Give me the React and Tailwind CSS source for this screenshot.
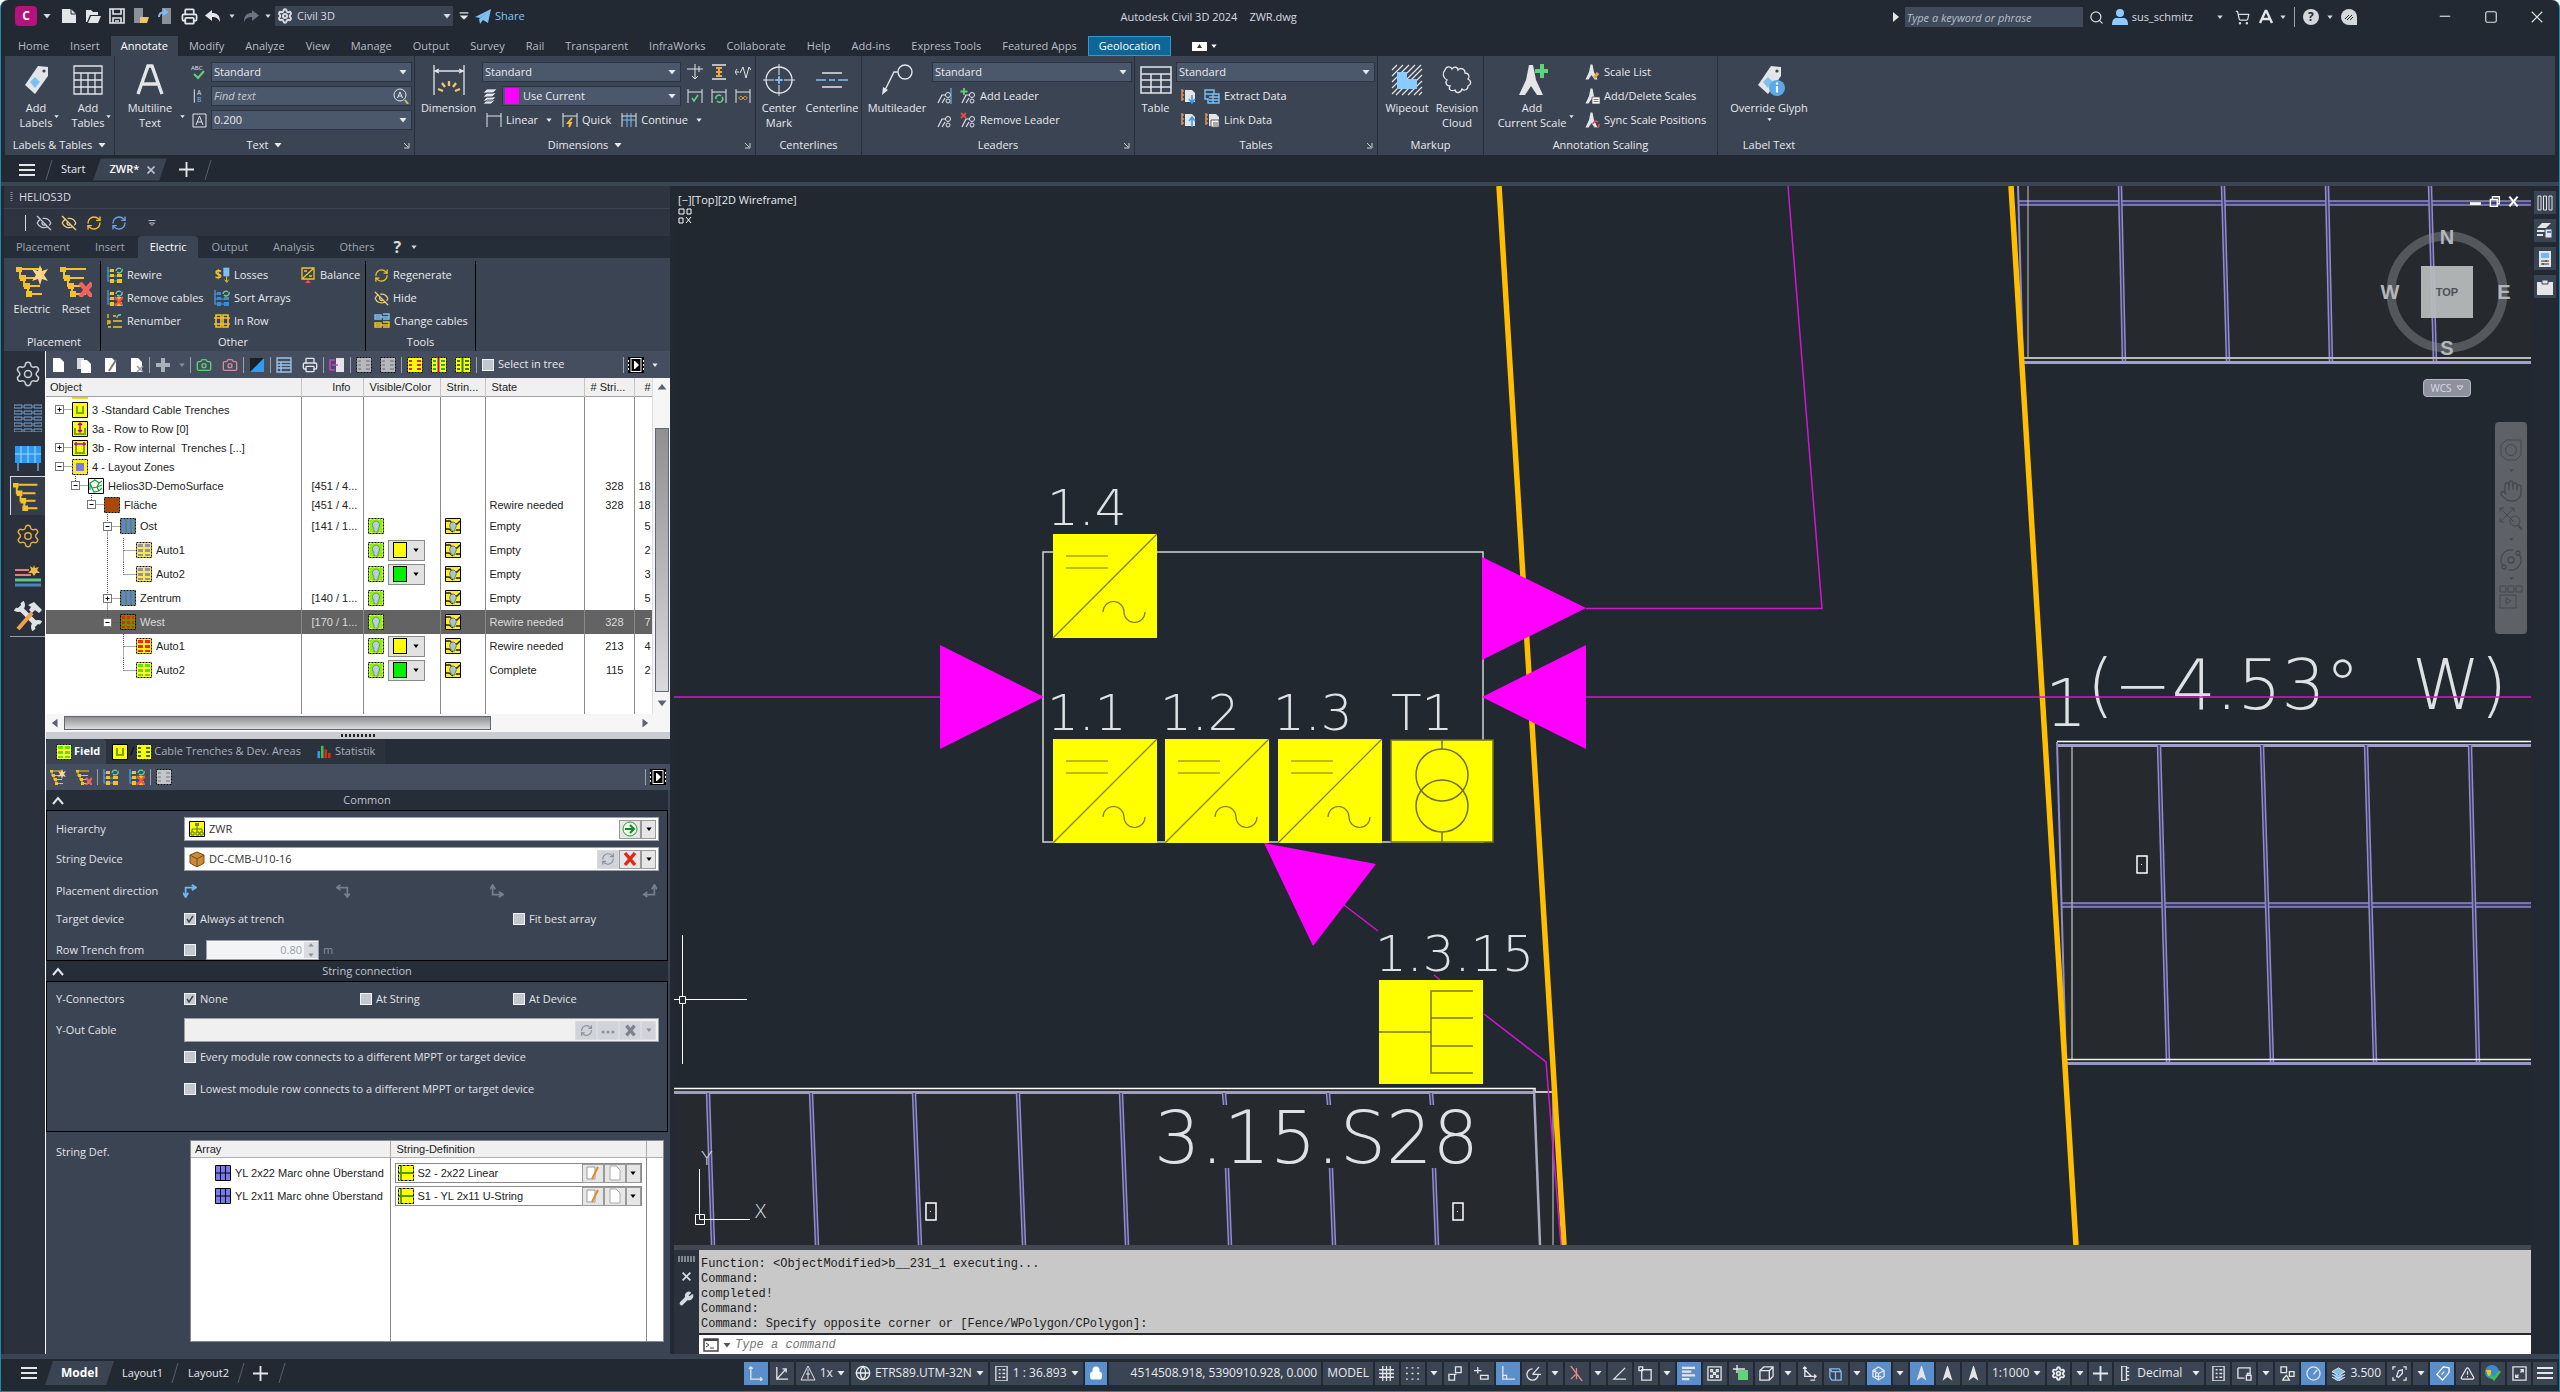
import { useState } from 'react';
import clsx from 'clsx';
import {
  Settings, Search, ShoppingCart, TriangleAlert, Hand, Printer, RefreshCw, EyeOff, Lock, Globe,
  Wrench, Camera, Orbit,
} from 'lucide-react';

/* ---------- small helpers ---------- */

function Svg({ w = 16, h = w, box = '0 0 16 16', className, children }) {
  return (
    <svg width={w} height={h} viewBox={box} fill="none" className={clsx('shrink-0', className)} aria-hidden="true">
      {children}
    </svg>
  );
}

function Caret({ size = 8, className }) {
  return (
    <Svg w={size} box="0 0 8 8" className={className}>
      <path d="M0.5 2h7L4 6.5z" fill="currentColor" />
    </Svg>
  );
}

function Sep({ className }) {
  return <span className={clsx('w-px shrink-0 bg-[#9aa1ad]', className)} />;
}

function Combo({ label, value, className, children }) {
  return (
    <div className={clsx('relative flex h-5 items-center border border-[#2b3442] bg-[#4b576a] text-[#e8eaee]', className)}>
      {children}
      <select aria-label={label} className="h-full min-w-0 flex-1 appearance-none bg-transparent pl-0.5 outline-none">
        <option>{value}</option>
      </select>
      <Caret className="pointer-events-none absolute right-1" />
    </div>
  );
}

function BigButton({ lines, caret, caretBelow, className, children }) {
  return (
    <button className={clsx('relative flex shrink-0 flex-col items-center pt-2', className)}>
      <span className="flex h-8 items-center justify-center">{children}</span>
      <span className="mt-1 flex flex-col leading-[15px]">
        {lines.map(l => <span key={l}>{l}</span>)}
      </span>
      {caret && <Caret size={5} className="absolute right-0 bottom-4" />}
      {caretBelow && <Caret size={5} className="mt-0.5" />}
    </button>
  );
}

function Panel({ title, caret, corner, className, children }) {
  return (
    <section className={clsx('flex shrink-0 flex-col border-r border-[#272f3c]', className)}>
      <div className="flex flex-1">{children}</div>
      <div className="relative flex h-5 items-center justify-center gap-1.5">
        {title}
        {caret && <Caret />}
        {corner && (
          <Svg w={7} box="0 0 7 7" className="absolute right-1">
            <path d="M1 1l4 4M6 1v5H1" stroke="#c9cdd4" />
          </Svg>
        )}
      </div>
    </section>
  );
}

function SmallButton({ icon, label, caret, className }) {
  return (
    <button className={clsx('flex h-5 items-center gap-1', className)}>
      {icon}
      {label}
      {caret && <Caret size={6} className="ml-1" />}
    </button>
  );
}

/* ---------- ribbon glyphs ---------- */

const W = '#e3e5e9';
const B = '#7cc0f2';
const G = '#5fd27a';
const R = '#e5484d';
const Y = '#f3c22b';

const TagIcon = ({ info }) => (
  <Svg w={32} box="0 0 32 32">
    <path d="M18 2l10 1v9L15 30 5 21z" fill={W} />
    <circle cx="24" cy="7" r="1.6" fill="#3b4453" />
    <path d="M15 13l5 5-5 6-5-6z" fill={B} />
    {info && (
      <>
        <circle cx="24" cy="24" r="8" fill="#5aa9e6" />
        <path d="M24 18.5v2M24 22v6.5" stroke="#fff" strokeWidth="2.2" />
      </>
    )}
  </Svg>
);

const GridTable = () => (
  <Svg w={32} box="0 0 32 32">
    <path d="M2 2h28v28H2zM2 9h28M2 16h28M2 23h28M9 9v21M16 9v21M23 9v21" stroke={W} strokeWidth="1.3" />
  </Svg>
);

const TableIcon = () => (
  <Svg w={32} box="0 0 32 32">
    <path d="M1 3h30v26H1zM1 10h30M1 16h30M1 23h30M11 10v19M21 10v19" stroke={W} strokeWidth="1.5" />
  </Svg>
);

const LetterA = () => (
  <Svg w={32} box="0 0 32 32">
    <path d="M4 30L14 2h4l10 28M9 20h14" stroke={W} strokeWidth="3.4" />
  </Svg>
);

const DimensionIcon = () => (
  <Svg w={32} box="0 0 32 32">
    <path d="M1 1v30M31 1v30M3 7h26M6 5L2 7l4 2M26 5l4 2-4 2" stroke={W} strokeWidth="1.3" />
    <path d="M16 17v5M9 19l3 4M23 19l-3 4M5 25l5 2M27 25l-5 2" stroke="#f0c46a" strokeWidth="2.4" />
  </Svg>
);

const CenterMark = () => (
  <Svg w={32} box="0 0 32 32">
    <circle cx="16" cy="16" r="13" stroke={W} strokeWidth="1.3" />
    <path d="M16 0v32M0 16h32" stroke={W} strokeDasharray="11 2 6 2" />
    <path d="M16 12v8M12 16h8" stroke={B} strokeWidth="1.5" />
  </Svg>
);

const Centerline = () => (
  <Svg w={32} box="0 0 32 32">
    <path d="M6 9h20M6 23h20" stroke={W} strokeWidth="1.4" />
    <path d="M0 16h10M13 16h6M22 16h10" stroke={B} strokeWidth="1.4" />
  </Svg>
);

const LeaderIcon = () => (
  <Svg w={32} box="0 0 32 32">
    <circle cx="24" cy="8" r="7" stroke={W} strokeWidth="1.4" />
    <path d="M17 8h-4L3 28" stroke={W} strokeWidth="1.4" />
    <path d="M1 31l1-8 5 3z" fill={W} />
  </Svg>
);

const WipeoutIcon = () => (
  <Svg w={32} box="0 0 32 32">
    <path
      d="M1 6l5-5M1 12L12 1M1 18L18 1M1 24L24 1M1 30L30 1M5 31L31 5M11 31l20-20M17 31l14-14M23 31l8-8M28 31l3-3"
      stroke={W}
      strokeWidth="1.2"
    />
    <path d="M6 8h10v7h10v10H6z" fill="#8ccbff" />
  </Svg>
);

const CloudIcon = () => (
  <Svg w={32} box="0 0 32 32">
    <path
      d="M4 6c1-4 6-4 7-1 2-3 6-2 6 1 3-3 7-1 7 3 4 0 5 4 3 6 4 2 3 6 0 7 0 4-4 5-6 3-1 4-6 5-7 1-4 2-7-1-5-4-4 0-5-4-3-6-4-2-5-7-2-10z"
      stroke={W}
      strokeWidth="1.3"
    />
  </Svg>
);

const ScaleFig = ({ badge, big }) => (
  <Svg w={big ? 32 : 16}>
    <path d="M6.5 0.5h2L10 8l3.5 7.5h-3L7.5 11l-3 4.5h-3L5 8z" fill={W} />
    {badge === 'plus' && <path d="M13 0v7M9.5 3.5h6.5" stroke={G} strokeWidth="2" />}
    {badge === 'pencil' && <path d="M10 14l4-5" stroke="#f0a04b" strokeWidth="3" />}
    {badge === 'list' && <path d="M8 9h8v7H8zM9.5 11.5h5M9.5 13.5h5" fill="#fff" stroke="#555" strokeWidth="0.8" />}
    {badge === 'sync' && <path d="M9 12a3 3 0 015-2M15 12a3 3 0 01-5 3" stroke={R} strokeWidth="1.5" />}
  </Svg>
);

const DimSmall = ({ kind }) => (
  <Svg>
    {kind !== 'jog' && kind !== 'break' && kind !== 'space' && <path d="M1 1v14M15 1v14M1 4h14" stroke={W} />}
    {kind === 'break' && <path d="M8 0v15M5 12l3 3 3-3M0 5h16M12 2v6" stroke={W} />}
    {kind === 'jog' && <path d="M0 8h4M2 5L0 8l2 3M5 9l3-6 3 11 3-11 2 3" stroke={W} />}
    {kind === 'space' && <><path d="M1 1h14M1 15h14" stroke={W} strokeWidth="1.4" /><path d="M8 3v10M5 4h6M5 8h6M5 12h6" stroke="#f0a93a" strokeWidth="2" /></>}
    {kind === 'check' && <path d="M5 10l2 3 4-6" stroke={G} strokeWidth="1.6" />}
    {kind === 'update' && <path d="M5 11a3 3 0 015-3M11 9a3 3 0 01-5 4" stroke={G} strokeWidth="1.5" />}
    {kind === 'link' && <path d="M8 10c-2-3-4-1-4 0s2 3 4 0 4-1 4 0-2 3-4 0z" stroke="#f0a93a" />}
    {kind === 'quick' && <path d="M10 6l-4 5h3l-2 4" stroke="#f0b84a" strokeWidth="2" />}
    {kind === 'cont' && <path d="M6 1v14M10 1v14M1 8h14" stroke={B} />}
  </Svg>
);

const LayersIcon = () => (
  <Svg>
    <path d="M5 1h10l-4 4H1zM5 5h9l-4 4H1zM5 9h9l-4 4H1zM5 12h8l-4 4H1z" fill={W} stroke="#3b4453" strokeWidth="0.7" />
  </Svg>
);

const MultiSmall = ({ badge }) => (
  <Svg>
    <path d="M2 15l4-8h4M6 15l3-5" stroke={W} strokeWidth="1.2" />
    <circle cx="12" cy="7" r="2.5" stroke={W} />
    <circle cx="12" cy="13" r="2" stroke={W} />
    {badge === 'plus' && <path d="M4 0v7M0.5 3.5h7" stroke={G} strokeWidth="1.8" />}
    {badge === 'x' && <path d="M1 1l5 5M6 1L1 6" stroke={R} strokeWidth="1.8" />}
    {badge === 'align' && <path d="M15 0v16" stroke={B} />}
  </Svg>
);

const DataIcon = ({ kind }) => (
  <Svg>
    {kind === 'extract' ? (
      <path d="M1 2h9v4h5v9H4v-4H1zM1 6h9M5 9h10M5 12h10M9 6v9" stroke={B} strokeWidth="1.4" />
    ) : (
      <>
        <path d="M5 2h7l3 3v9H5z" fill={W} />
        <path d="M2 1v12M2 3h2M2 7h2M2 11h2" stroke="#e0915a" strokeWidth="1.5" />
        {kind === 'down' && <path d="M12 7v7M9 11l3 4 3-4" stroke="#3b9be8" strokeWidth="1.6" />}
        {kind === 'up' && <path d="M12 15V6M9 9l3-4 3 4" stroke="#3b9be8" strokeWidth="1.6" />}
        {kind === 'link' && <path d="M7 8h8v7H7zM9 11h5M9 13h5" fill="#fff" stroke="#555" />}
      </>
    )}
  </Svg>
);

/* ---------- title bar ---------- */

function TitleBar() {
  return (
    <header className="flex h-[35px] shrink-0 items-start justify-between pt-[5px] pr-2 pl-3.5 text-[#d8dbe0]">
      <div className="flex items-center">
        <button aria-label="Application menu" className="flex h-5 w-[22px] items-center justify-center rounded-sm bg-[#b5127c] text-[12px] font-bold text-white">C</button>
        <Caret className="mx-1.5" />
        <button aria-label="New" className="flex w-6 justify-center">
          <Svg><path d="M1 1h9l5 5v9H1z" fill={W} /><path d="M10 1v5h5" stroke="#222933" /></Svg>
        </button>
        <button aria-label="Open" className="flex w-6 justify-center">
          <Svg><path d="M1 2h5l2 2h5v3H5l-3 7H1z" fill={W} /><path d="M6 8h10l-3 7H3z" fill={W} /></Svg>
        </button>
        <button aria-label="Save" className="flex w-6 justify-center">
          <Svg><path d="M1 1h14v14H1zM4 1v5h8V1M4 15v-5h8v5M6 13h4" stroke={W} strokeWidth="1.6" /></Svg>
        </button>
        <button aria-label="Save as" className="flex w-6 justify-center">
          <Svg><path d="M1 0h9v15H1z" fill="#8b919b" /><path d="M7 9h9l-2 6H7z" fill="#f0c46a" /></Svg>
        </button>
        <button aria-label="Open from web" className="flex w-6 justify-center">
          <Svg><path d="M5 0h9v16H5z" fill="#8b919b" /><path d="M2 9c0-4 2-5 6-5M6 1l4 3-4 3" stroke={B} strokeWidth="2" /></Svg>
        </button>
        <button aria-label="Plot" className="flex w-6 justify-center"><Printer size={17} strokeWidth={2.5} color={W} /></button>
        <button aria-label="Undo" className="flex w-6 justify-center">
          <Svg><path d="M7 2v3c5 0 8 2 8 9-2-4-4-5-8-5v4L0 7.5z" fill={W} /></Svg>
        </button>
        <Caret size={6} className="mx-1" />
        <button aria-label="Redo" className="flex w-6 justify-center">
          <Svg><path d="M9 2v3C4 5 1 7 1 14c2-4 4-5 8-5v4l7-5.5z" fill="#6c7380" /></Svg>
        </button>
        <Caret size={6} className="mr-1 ml-0.5" />
        <div className="relative flex h-5 w-[178px] items-center bg-[#3b4453] pl-0.5">
          <Settings size={16} strokeWidth={3} />
          <select aria-label="Workspace" className="h-full flex-1 appearance-none bg-transparent pl-1 outline-none">
            <option>Civil 3D</option>
          </select>
          <Caret className="pointer-events-none absolute right-0.5" />
        </div>
        <Svg w={10} className="mx-1.5"><path d="M1 3h14" stroke={W} strokeWidth="2" /><path d="M1 7h14l-7 7z" fill={W} /></Svg>
        <button className="flex items-center gap-1 text-[#84c6f5]">
          <Svg><path d="M0 9L16 1l-3 14-5-3-3 4-1-5 9-7-8 6z" fill={B} /></Svg>
          Share
        </button>
      </div>

      <h1 className="flex h-[22px] items-center gap-3 whitespace-pre">
        <span>Autodesk Civil 3D 2024</span>
        <span>ZWR.dwg</span>
      </h1>

      <div className="flex h-[22px] items-center">
        <Svg w={6} h={10} box="0 0 6 10"><path d="M0 0l6 5-6 5z" fill={W} /></Svg>
        <input aria-label="Search" placeholder="Type a keyword or phrase" className="ml-1.5 h-5 w-[178px] bg-[#3f4b5b] px-0.5 italic outline-none placeholder:text-[#b9bec7]" />
        <button aria-label="Search" className="ml-1.5"><Search size={15} /></button>
        <Svg className="ml-2"><circle cx="8" cy="4" r="4" fill="#8ccbff" /><path d="M0 16c0-5 2-7 4-7h8c2 0 4 2 4 7z" fill="#8ccbff" /></Svg>
        <span className="ml-1">sus_schmitz</span>
        <Caret size={6} className="ml-6" />
        <button aria-label="Store" className="ml-3"><ShoppingCart size={15} /></button>
        <button aria-label="Autodesk app" className="ml-2">
          <Svg><path d="M8 1l6 13M8 1L2 14M3 10h10" stroke={W} strokeWidth="2.4" /></Svg>
        </button>
        <Caret size={6} className="ml-1.5" />
        <Sep className="mx-2 h-5 bg-[#5a6270]" />
        <button aria-label="Help" className="flex h-4 w-4 items-center justify-center rounded-full bg-[#d5d7db] text-[12px] font-bold text-[#222933]">?</button>
        <Caret size={6} className="mx-2" />
        <Svg><path d="M8 0a8 8 0 018 8v8H8A8 8 0 018 0z" fill="#d5d7db" /><path d="M4 10l4-4M6 11l5-5M9 11l3-3" stroke="#222933" /></Svg>
        <button aria-label="Minimize" className="ml-[82px]"><Svg w={12}><path d="M1 7h14" stroke={W} strokeWidth="1.5" /></Svg></button>
        <button aria-label="Maximize" className="ml-[34px]"><Svg w={12}><rect x="1" y="1" width="14" height="14" rx="2" stroke={W} strokeWidth="1.5" /></Svg></button>
        <button aria-label="Close" className="mr-2 ml-[34px]"><Svg w={12}><path d="M1 1l14 14M15 1L1 15" stroke={W} strokeWidth="1.5" /></Svg></button>
      </div>
    </header>
  );
}

const MENU = [
  'Home', 'Insert', 'Annotate', 'Modify', 'Analyze', 'View', 'Manage', 'Output', 'Survey', 'Rail', 'Transparent',
  'InfraWorks', 'Collaborate', 'Help', 'Add-ins', 'Express Tools', 'Featured Apps', 'Geolocation',
];

function MenuTabs() {
  return (
    <nav className="flex h-5 shrink-0 gap-px pl-[7px]">
      {MENU.map(m => (
        <button
          key={m}
          className={clsx(
            'h-full px-2.5',
            m === 'Annotate' && 'bg-[#3b4453] text-white',
            m === 'Geolocation' && 'border border-[#2f9bcb] bg-[#0e6696] text-white',
            m !== 'Annotate' && m !== 'Geolocation' && 'text-[#b6bbc4]',
          )}
        >
          {m}
        </button>
      ))}
      <button aria-label="Minimize ribbon" className="ml-5 flex items-center gap-1 text-white">
        <Svg w={15} h={9} box="0 0 15 9"><path d="M0 0h15v9H0z" fill="#fff" /><path d="M5 6l2.5-4L10 6z" fill="#333" /></Svg>
        <Caret size={6} />
      </button>
    </nav>
  );
}

function Ribbon() {
  return (
    <div className="mr-1 ml-1 flex h-[99px] shrink-0 bg-[#3b4453] text-[#e8eaee]">
      <Panel title="Labels & Tables" caret className="w-[110px]">
        <BigButton lines={['Add', 'Labels']} caret className="ml-2 w-[46px]"><TagIcon /></BigButton>
        <BigButton lines={['Add', 'Tables']} caret className="ml-1.5 w-[46px]"><GridTable /></BigButton>
      </Panel>

      <Panel title="Text" caret corner className="w-[300px]">
        <BigButton lines={['Multiline', 'Text']} caret className="w-[70px]"><LetterA /></BigButton>
        <div className="flex flex-1 flex-col gap-1 pt-1.5 pr-0.5 pl-1.5">
          <div className="flex items-center gap-1">
            <Svg><path d="M3 10l4 4 6-7" stroke={G} strokeWidth="2" /><text x="0" y="6" fontSize="6" fill={W}>ABC</text></Svg>
            <Combo label="Text style" value="Standard" className="flex-1" />
          </div>
          <div className="flex items-center gap-1">
            <Svg box="0 0 24 24"><path d="M5 2v20" stroke={W} strokeWidth="1.5" /><text x="9" y="11" fontSize="10" fill={W}>A</text><text x="9" y="21" fontSize="10" fill={B}>B</text></Svg>
            <div className="flex h-5 flex-1 items-center border border-[#2b3442] bg-[#4b576a] pr-0.5">
              <input aria-label="Find text" placeholder="Find text" className="min-w-0 flex-1 bg-transparent pl-0.5 italic outline-none placeholder:text-[#c3c7ce]" />
              <Svg><circle cx="7" cy="7" r="6" stroke={W} /><path d="M4.5 10L7 4l2.5 6M5.5 8h3" stroke={W} /><path d="M12 12l3 4" stroke="#d8b46a" strokeWidth="2" /></Svg>
            </div>
          </div>
          <div className="flex items-center gap-1">
            <Svg><path d="M2 2h13v13H2z" stroke={W} /><path d="M5 13l3.5-9 3.5 9M6 10h5" stroke={W} /></Svg>
            <Combo label="Text height" value="0.200" className="flex-1" />
          </div>
        </div>
      </Panel>

      <Panel title="Dimensions" caret corner className="w-[341px]">
        <BigButton lines={['Dimension']} className="w-[67px]"><DimensionIcon /></BigButton>
        <div className="flex flex-1 flex-col gap-1 pt-1.5">
          <div className="flex items-center">
            <Combo label="Dimension style" value="Standard" className="w-[199px]" />
            <div className="flex gap-2 pl-1.5"><DimSmall kind="break" /><DimSmall kind="space" /><DimSmall kind="jog" /></div>
          </div>
          <div className="flex items-center">
            <span className="w-5"><LayersIcon /></span>
            <Combo label="Dimension layer" value="Use Current" className="w-[179px]">
              <span className="mr-0.5 ml-0.5 h-4 w-3.5 bg-[#ff00ff]" />
            </Combo>
            <div className="flex gap-2 pl-1.5"><DimSmall kind="check" /><DimSmall kind="update" /><DimSmall kind="link" /></div>
          </div>
          <div className="flex items-center gap-2.5 pl-1">
            <SmallButton icon={<DimSmall />} label="Linear" caret />
            <SmallButton icon={<DimSmall kind="quick" />} label="Quick" />
            <SmallButton icon={<DimSmall kind="cont" />} label="Continue" caret />
          </div>
        </div>
      </Panel>

      <Panel title="Centerlines" className="w-[106px]">
        <BigButton lines={['Center', 'Mark']} className="w-[46px]"><CenterMark /></BigButton>
        <BigButton lines={['Centerline']} className="w-[60px]"><Centerline /></BigButton>
      </Panel>

      <Panel title="Leaders" corner className="w-[273px]">
        <BigButton lines={['Multileader']} className="w-[70px]"><LeaderIcon /></BigButton>
        <div className="flex flex-1 flex-col gap-1 pt-1.5 pr-0.5">
          <Combo label="Leader style" value="Standard" />
          <div className="flex items-center gap-2 pl-1"><MultiSmall badge="align" /><SmallButton icon={<MultiSmall badge="plus" />} label="Add Leader" /></div>
          <div className="flex items-center gap-2 pl-1"><MultiSmall /><SmallButton icon={<MultiSmall badge="x" />} label="Remove Leader" /></div>
        </div>
      </Panel>

      <Panel title="Tables" corner className="w-[243px]">
        <BigButton lines={['Table']} className="w-[41px]"><TableIcon /></BigButton>
        <div className="flex flex-1 flex-col gap-1 pt-1.5 pr-0.5">
          <Combo label="Table style" value="Standard" />
          <div className="flex items-center gap-2 pl-1"><DataIcon kind="down" /><SmallButton icon={<DataIcon kind="extract" />} label="Extract Data" /></div>
          <div className="flex items-center gap-2 pl-1"><DataIcon kind="up" /><SmallButton icon={<DataIcon kind="link" />} label="Link Data" /></div>
        </div>
      </Panel>

      <Panel title="Markup" className="w-[106px]">
        <BigButton lines={['Wipeout']} className="ml-1 w-[50px]"><WipeoutIcon /></BigButton>
        <BigButton lines={['Revision', 'Cloud']} className="w-[50px]"><CloudIcon /></BigButton>
      </Panel>

      <Panel title="Annotation Scaling" className="w-[234px]">
        <BigButton lines={['Add', 'Current Scale']} caret className="ml-1.5 w-[84px]"><ScaleFig badge="plus" big /></BigButton>
        <div className="flex flex-1 flex-col gap-1 pt-1.5 pl-2.5">
          <SmallButton icon={<ScaleFig badge="pencil" />} label="Scale List" />
          <SmallButton icon={<ScaleFig badge="list" />} label="Add/Delete Scales" />
          <SmallButton icon={<ScaleFig badge="sync" />} label="Sync Scale Positions" />
        </div>
      </Panel>

      <Panel title="Label Text" className="w-[102px] border-r-0">
        <BigButton lines={['Override Glyph']} caretBelow className="flex-1"><TagIcon info /></BigButton>
      </Panel>
    </div>
  );
}

function Slash() {
  return <Svg w={8} h={22} box="0 0 8 22"><path d="M7 1L1 21" stroke="#566070" /></Svg>;
}

const MenuLines = () => (
  <Svg w={16} h={14} box="0 0 16 14"><path d="M0 2h16M0 7h16M0 12h16" stroke={W} strokeWidth="1.8" /></Svg>
);

const PlusGlyph = () => (
  <Svg w={15}><path d="M8 0v16M0 8h16" stroke={W} strokeWidth="2" /></Svg>
);

function FileTabs() {
  return (
    <div className="flex h-[27px] shrink-0 items-center pt-0.5 pl-[18px] text-[#e8eaee]">
      <button aria-label="File tabs"><MenuLines /></button>
      <span className="ml-2.5 flex"><Slash /></span>
      <button className="mr-2 ml-2">Start</button>
      <div className="relative flex h-[23px] items-center pr-3 pl-4">
        <Svg w="100%" h="100%" box="0 0 78 23" className="absolute inset-0"><path d="M8 0h70l-8 23H0z" fill="#3b4453" /></Svg>
        <button className="relative font-semibold text-white">ZWR*</button>
        <button aria-label="Close ZWR" className="relative ml-2"><Svg w={8}><path d="M1 1l14 14M15 1L1 15" stroke="#b6bbc4" strokeWidth="3.5" /></Svg></button>
      </div>
      <button aria-label="New drawing" className="ml-3"><PlusGlyph /></button>
      <span className="ml-2.5 flex"><Slash /></span>
    </div>
  );
}

/* ---------- HELIOS3D palette ---------- */

const TreeGlyph = ({ size = 16, badge, color = Y }) => (
  <Svg w={size}>
    <path d="M2 3v4M4 7v4M6 11v4M3 2h10M5 6.500h7M7 10.500h5M8 14.500h5" stroke={color} strokeWidth="1" />
    <path d="M0 1h3v2.500H0zM2 5h3v3H2zM4 9h3v3H4zM5 13h3v3H5z" fill={color} />
    {badge === 'star' && <path d="M12 0l1 3 3-1-2 3 2 3-3-1-1 3-1-3-3 1 2-3-2-3 3 1z" fill="#fbd58a" />}
    {badge === 'x' && <path d="M10 9l6 7M16 9l-6 7" stroke="#f0635f" strokeWidth="2.2" />}
  </Svg>
);

const WireIcon = ({ badge, tone = Y }) => (
  <Svg>
    <path d="M1 0v14h4M1 4h4M1 9h4M7 9h8M7 14h8" stroke="#4aa3e0" strokeWidth="1.2" />
    <path d="M3 2h4v3H3zM3 7h4v3H3zM3 12h4v4H3zM10 7h5v3h-5zM10 12h5v4h-5z" fill={tone} />
    <path d="M9 4a3 3 0 015-2M15 2a3 3 0 01-5 3" stroke="#6fd39a" strokeWidth="1.3" />
    {badge && <path d="M8 7l8 9M16 7l-8 9" stroke="#f0553f" strokeWidth="2.2" />}
  </Svg>
);

const LossIcon = () => (
  <Svg box="0 0 24 24">
    <text x="1" y="18" fontSize="18" fontWeight="700" fill={Y}>$</text>
    <path d="M14 1h9v13h-9z" fill={B} /><path d="M19 14v8M16 19l3 4 3-4" stroke={Y} strokeWidth="1.5" />
  </Svg>
);

const RenumberIcon = () => (
  <Svg><path d="M1 1v4M0 8h3v2H0v2M1 14h3M6 8h9M6 14h9M6 3h3" stroke={Y} strokeWidth="1.3" /><path d="M10 5a3 3 0 014-3" stroke="#6fd39a" strokeWidth="1.4" /></Svg>
);

const InRowIcon = () => (
  <Svg><path d="M2 2h5v12H2zM9 2h5v12H9zM0 5h8M0 11h8M8 5h8M8 11h8" stroke={Y} strokeWidth="1.6" /></Svg>
);

const BalanceIcon = () => (
  <Svg><path d="M2 1h12v11H2zM3 11L13 2M4 4h3M9 9h3" stroke={Y} strokeWidth="1.3" /><path d="M5 16l3-3 3 3z" fill="#f0553f" /></Svg>
);

const CablesIcon = () => (
  <Svg><path d="M1 2h6v4H1zM9 1h6v5H9M1 4h14" stroke={B} strokeWidth="1.4" /><path d="M1 10h6v4H1zM9 9h6v5H9M1 12h14" stroke={Y} strokeWidth="1.4" /></Svg>
);

function HeliosRibbon() {
  return (
    <div className="flex h-[93px] shrink-0 bg-[#3b4453] pt-[3px] text-[#e8eaee]">
      <div className="flex w-[97px] flex-col items-center border-r border-black pl-1">
        <div className="flex flex-1 gap-1">
          <button className="flex w-10 flex-col items-center gap-1 pt-1"><TreeGlyph size={32} badge="star" />Electric</button>
          <button className="flex w-10 flex-col items-center gap-1 pt-1"><TreeGlyph size={32} badge="x" />Reset</button>
        </div>
        <span className="pb-px">Placement</span>
      </div>
      <div className="flex w-[265px] flex-col items-center border-r border-black">
        <div className="grid w-full flex-1 grid-cols-[107px_86px_1fr] content-start gap-y-[3px] pt-1 pl-1.5">
          <SmallButton icon={<WireIcon />} label="Rewire" />
          <SmallButton icon={<LossIcon />} label="Losses" />
          <SmallButton icon={<BalanceIcon />} label="Balance" />
          <SmallButton icon={<WireIcon badge />} label="Remove cables" />
          <SmallButton icon={<WireIcon tone="#2f8fdd" />} label="Sort Arrays" className="col-span-2" />
          <SmallButton icon={<RenumberIcon />} label="Renumber" />
          <SmallButton icon={<InRowIcon />} label="In Row" />
        </div>
        <span className="pb-px">Other</span>
      </div>
      <div className="flex w-[110px] flex-col items-center border-r border-black">
        <div className="flex w-full flex-1 flex-col gap-[3px] pt-1 pl-2">
          <SmallButton icon={<RefreshCw size={15} color={Y} />} label="Regenerate" />
          <SmallButton icon={<EyeOff size={15} color="#f0cf7a" />} label="Hide" />
          <SmallButton icon={<CablesIcon />} label="Change cables" />
        </div>
        <span className="pb-px">Tools</span>
      </div>
    </div>
  );
}

const ZONES = {
  zone: ['#ffee22', '#7a7ae6'],
  flaeche: ['#8a5a00', '#e02a10'],
  ost: ['#5c8a5c', '#5f84d8'],
  west: ['#7a8a00', '#e02a10'],
  auto: ['#ffe94a', '#8f8fb8'],
  autoRed: ['#ffee22', '#f02810'],
  autoGreen: ['#ffff33', '#66e000'],
};

// Square yellow-bordered symbols used throughout the object tree
function ZoneIcon({ kind }) {
  if (kind === 'surface') {
    return <Svg><path d="M0.5 0.5h15v15H0.5z" fill="#fff" stroke="#000" /><path d="M2 5l5-3 4 3-2 4-5 1zM9 9l5-2M4 10l2 4 5-1 3-3M11 5l3-2M2 5v7M9 9l2 4" stroke="#14a038" strokeWidth="1.2" /></Svg>;
  }
  if (kind === 'trench' || kind === 'row' || kind === 'internal') {
    return (
      <Svg>
        <path d="M0.5 0.5h15v15H0.5z" fill="#ffff00" stroke="#000" />
        {kind === 'trench' && <path d="M5 4v7h6V4" stroke="#6fae00" strokeWidth="2" />}
        {kind === 'row' && <><path d="M3 7v6h10V7" stroke="#6fae00" strokeWidth="2" /><path d="M8 2v9M6 4l2-2 2 2M6 9l2 2 2-2" stroke="#b000b0" strokeWidth="1.5" /></>}
        {kind === 'internal' && <><path d="M4 6v7h8V6" stroke="#6fae00" strokeWidth="2" /><path d="M2 4h12M4 2v4M12 2v4" stroke="#b000b0" strokeWidth="1.5" /></>}
      </Svg>
    );
  }
  const [bg, cell] = ZONES[kind];
  return (
    <Svg>
      <path d="M0.5 0.5h15v15H0.5z" fill={bg} stroke="#000" strokeDasharray="2 1" />
      {kind === 'zone' && <path d="M4 4h8v8H4z" fill={cell} />}
      {kind === 'ost' && <path d="M2 1h3v14H2zM7 1h3v14H7zM12 1h2v14h-2z" fill={cell} />}
      {(kind === 'flaeche' || kind === 'west') && <path d="M2 2h3v3H2zM7 2h3v3H7zM12 2h2v3h-2zM2 7h3v3H2zM7 7h3v3H7zM12 7h2v3h-2zM2 12h3v2H2zM7 12h3v2H7zM12 12h2v2h-2z" fill={cell} />}
      {kind.startsWith('auto') && <path d="M2 2h5v3H2zM9 2h5v3H9zM2 7h5v3H2zM9 7h5v3H9zM2 12h5v2H2zM9 12h5v2H9z" fill={cell} />}
    </Svg>
  );
}

const Bulb = () => (
  <Svg>
    <path d="M0.5 0.5h15v15H0.5z" fill="#8cf000" stroke="#000" strokeDasharray="2 1" />
    <path d="M1.5 1.5h13v13h-13z" stroke="#ffff66" strokeDasharray="2 2" />
    <path d="M8 3a4 4 0 013 6l-1 2v3H6v-3L5 9a4 4 0 013-6z" fill="#b8cfe0" stroke="#5b7286" strokeWidth="0.7" />
  </Svg>
);

const StringBulb = () => (
  <Svg>
    <path d="M0.5 0.5h15v15H0.5z" fill="#ffee22" stroke="#000" />
    <path d="M1 3h4l3 3h4l3-3M1 11h3l4 3M15 12h-4" stroke="#222" strokeWidth="1.4" />
    <path d="M8 4a3.5 3.5 0 013 5l-1 2v2H6v-2L5 9a3.5 3.5 0 013-5z" fill="#a9c4d8" stroke="#46586a" strokeWidth="0.7" />
  </Svg>
);

const StringIcon = () => (
  <Svg><path d="M0.5 0.5h15v15H0.5z" fill="#ffff00" stroke="#000" strokeDasharray="3 1" /><path d="M1 8h14M3 1v14" stroke="#4a9a00" strokeWidth="1.8" /></Svg>
);

const ROWS = [
  { id: 'r1', depth: 0, exp: '+', icon: 'trench', name: '3 -Standard Cable Trenches' },
  { id: 'r2', depth: 0, icon: 'row', name: '3a - Row to Row [0]' },
  { id: 'r3', depth: 0, exp: '+', icon: 'internal', name: '3b - Row internal  Trenches [...]' },
  { id: 'r4', depth: 0, exp: '-', icon: 'zone', name: '4 - Layout Zones' },
  { id: 'r5', depth: 1, exp: '-', icon: 'surface', name: 'Helios3D-DemoSurface', info: '[451 / 4...', n: '328', m: '18', last: true },
  { id: 'r6', depth: 2, exp: '-', icon: 'flaeche', name: 'Fläche', info: '[451 / 4...', state: 'Rewire needed', n: '328', m: '18', last: true },
  { id: 'r7', depth: 3, exp: '-', icon: 'ost', name: 'Ost', info: '[141 / 1...', vis: true, state: 'Empty', m: '5' },
  { id: 'r8', depth: 4, icon: 'auto', name: 'Auto1', vis: true, color: 'yellow', state: 'Empty', m: '2', guide: true },
  { id: 'r9', depth: 4, icon: 'auto', name: 'Auto2', vis: true, color: 'green', state: 'Empty', m: '3', guide: true, last: true },
  { id: 'r10', depth: 3, exp: '+', icon: 'ost', name: 'Zentrum', info: '[140 / 1...', vis: true, state: 'Empty', m: '5' },
  { id: 'r11', depth: 3, exp: '-', icon: 'west', name: 'West', info: '[170 / 1...', vis: true, state: 'Rewire needed', n: '328', m: '7', last: true },
  { id: 'r12', depth: 4, icon: 'autoRed', name: 'Auto1', vis: true, color: 'yellow', state: 'Rewire needed', n: '213', m: '4' },
  { id: 'r13', depth: 4, icon: 'autoGreen', name: 'Auto2', vis: true, color: 'green', state: 'Complete', n: '115', m: '2', last: true },
];

function Gutter({ row }) {
  const x = 13.5 + row.depth * 16;
  const w = 26 + row.depth * 16;
  const h = row.vis ? 24 : 19;
  const mid = Math.floor(h / 2) + 0.5;
  return (
    <svg width={w} height={h} viewBox={`0 0 ${w} ${h}`} className="shrink-0" aria-hidden="true">
      <g stroke="#555" strokeDasharray="1 1" fill="none">
        {row.id !== 'r2' && <path d={`M${x} ${mid}H${w}`} />}
        {row.depth > 0 && <path d={`M${x} 0V${mid}`} />}
        {row.depth > 0 && !row.last && <path d={`M${x} ${mid}V${h}`} />}
        {row.guide && <path d={`M${x - 16} 0V${h}`} />}
      </g>
      {row.exp && (
        <>
          <rect x={x - 4} y={mid - 4} width={8} height={8} fill="#fff" stroke="#777" />
          <path d={`M${x - 2} ${mid}h4`} stroke="#000" />
          {row.exp === '+' && <path d={`M${x} ${mid - 2}v4`} stroke="#000" />}
        </>
      )}
    </svg>
  );
}

function ObjectTree() {
  const [selected, setSelected] = useState('r11');

  return (
    <div className="flex h-[354px] shrink-0 flex-col bg-white text-[11px] text-[#222] [font-family:'Liberation_Sans',Arial,sans-serif]">
      <div className="flex min-h-0 flex-1">
        <div className="min-w-0 flex-1 overflow-hidden">
          <table className="h-full w-[622px] table-fixed border-collapse">
            <colgroup>
              <col className="w-[255px]" />
              <col className="w-[62px]" />
              <col className="w-[77px]" />
              <col className="w-[45px]" />
              <col className="w-[99px]" />
              <col className="w-[50px]" />
              <col className="w-[34px]" />
            </colgroup>
            <thead>
              <tr className="h-[18px] border-b border-[#a0a4a8] bg-[#f0f0f0] text-left [&>th]:border-r [&>th]:border-[#c4c4c4] [&>th]:p-0 [&>th]:leading-4 [&>th]:font-normal [&>th]:whitespace-nowrap">
                <th className="pl-1!">Object</th>
                <th className="pr-3! text-right">Info</th>
                <th className="pl-1.5!">Visible/Color</th>
                <th className="pl-1.5!">Strin...</th>
                <th className="pl-1.5!">State</th>
                <th className="pl-1.5!"># Stri...</th>
                <th className="pl-2.5!">#</th>
              </tr>
            </thead>
            <tbody>
              <tr className="h-1 [&>td]:border-r [&>td]:border-[#8a8a8a] [&>td]:p-0">
                <td><span className="ml-[26px] block h-0.5 w-4 bg-[#e0e000]" /></td>
                <td /><td /><td /><td /><td /><td />
              </tr>
              {ROWS.map(row => (
                <tr
                  key={row.id}
                  onClick={() => setSelected(row.id)}
                  className={clsx(
                    'leading-4 whitespace-nowrap [&>td]:border-r [&>td]:border-[#8a8a8a] [&>td]:p-0',
                    row.vis ? 'h-6' : 'h-[19px]',
                    selected === row.id && 'bg-[#636363] text-[#dcdcdc]',
                  )}
                >
                  <td>
                    <div className="flex items-center">
                      <Gutter row={row} />
                      <ZoneIcon kind={row.icon} />
                      <span className="pl-1 whitespace-pre">{row.name}</span>
                    </div>
                  </td>
                  <td className="pl-2.5!">{row.info}</td>
                  <td>
                    {row.vis && (
                      <div className="flex items-center gap-1 pl-1">
                        <Bulb />
                        {row.color && (
                          <button aria-label={`Color ${row.name}`} className="flex h-[21px] w-[37px] items-center gap-1.5 border border-[#8a8a8a] bg-[#e2e2e2] pl-1">
                            <span className={clsx('h-4 w-3.5 border border-black', row.color === 'yellow' ? 'bg-[#ffff00]' : 'bg-[#00ee00]')} />
                            <Caret size={6} className="text-black" />
                          </button>
                        )}
                      </div>
                    )}
                  </td>
                  <td>{row.vis && <span className="flex pl-1"><StringBulb /></span>}</td>
                  <td className="pl-1!">{row.state}</td>
                  <td className="pr-2.5! text-right">{row.n}</td>
                  <td className={row.m?.length > 1 ? 'pl-1!' : 'pl-2.5!'}>{row.m}</td>
                </tr>
              ))}
              <tr className="[&>td]:border-r [&>td]:border-[#8a8a8a]">
                <td /><td /><td /><td /><td /><td /><td />
              </tr>
            </tbody>
          </table>
        </div>
        <div className="flex w-[18px] flex-col items-center border-l border-[#ddd] bg-[#f6f6f6] text-[#5a6270]">
          <Caret size={10} className="my-1 rotate-180" />
          <span className="mt-8 w-3.5 flex-1 border border-[#5f6675] bg-gradient-to-b from-[#8f9090] to-[#d8dade]" />
          <Caret size={10} className="my-1.5" />
        </div>
      </div>
      <div className="flex h-[18px] shrink-0 items-center bg-[#f6f6f6] pr-5 pl-1 text-[#5a6270]">
        <Caret size={10} className="rotate-90" />
        <span className="ml-1 h-3.5 w-[427px] border border-[#5f6675] bg-gradient-to-b from-[#8f9090] to-[#dcdddf]" />
        <Caret size={10} className="ml-auto -rotate-90" />
      </div>
    </div>
  );
}

function Check({ label, checked, className }) {
  return (
    <label className={clsx('flex items-center gap-1', className)}>
      <span className="relative flex h-3 w-3">
        <input type="checkbox" defaultChecked={checked} className="peer h-3 w-3 appearance-none border border-[#f2f3f5] bg-[#c3c8d0]" />
        <Svg w={12} box="0 0 12 12" className="pointer-events-none absolute inset-0 opacity-0 peer-checked:opacity-100">
          <path d="M3 6l2 3 4-6" stroke="#3b4453" strokeWidth="1.5" />
        </Svg>
      </span>
      {label}
    </label>
  );
}

const DocIcon = ({ badge, double }) => (
  <Svg>
    {double && <path d="M1 1h7v11H1z" fill="#d5d8dd" />}
    <path d={double ? 'M5 3h6l4 4v9H5z' : 'M3 1h7l4 4v10H3z'} fill="#fff" />
    {badge === 'pen' && <path d="M7 14L14 3" stroke="#777" strokeWidth="2" />}
    {badge === 'x' && <path d="M9 9l6 6M15 9l-6 6" stroke="#999" strokeWidth="1.6" />}
  </Svg>
);

const GridBadge = ({ cell, bg = '#ffff00', line }) => (
  <Svg>
    <path d="M0.5 0.5h15v15H0.5z" fill={bg} stroke="#000" strokeDasharray="2 1" />
    <path d="M2 3h3v2H2zM2 7h3v2H2zM2 11h3v2H2zM10 3h4v2h-4zM10 7h4v2h-4zM10 11h4v2h-4z" fill={cell} />
    {line && <path d="M7.5 1v14" stroke={line} strokeWidth="2" />}
  </Svg>
);

const DockIcon = () => (
  <Svg><path d="M0 0h16v16H0z" fill="#000" /><path d="M3 1v14M13 1v14M3 1.500h10M3 14.500h10" stroke="#fff" /><path d="M0.500 3v10M15.500 3v10" stroke="#fff" strokeDasharray="2 2" /><path d="M6 4h1l4 4-4 4H6z" fill="#fff" /></Svg>
);

function TreeToolbar() {
  return (
    <div className="flex h-[27px] shrink-0 items-center bg-[#444e5e] pr-1 pl-1 text-[#e8eaee]">
      <div className="flex gap-2.5"><DocIcon /><DocIcon double /><DocIcon badge="pen" /><DocIcon badge="x" /></div>
      <Sep className="mx-[5px] h-4" />
      <Svg><path d="M8 1v14M1 8h14" stroke="#a9b0ba" strokeWidth="4" /></Svg>
      <Caret size={6} className="ml-2 text-[#8a919c]" />
      <Sep className="mx-[5px] h-4" />
      <div className="flex gap-2.5"><Camera size={16} color={G} /><Camera size={16} color="#d68aa0" /></div>
      <Sep className="mx-[5px] h-4" />
      <Svg><path d="M1 1h14v14H1z" fill="#1c1f26" /><path d="M15 1v14H1z" fill="#2f9df0" /></Svg>
      <Sep className="mx-[5px] h-4" />
      <div className="flex gap-2.5">
        <Svg><path d="M1 1h14v14H1zM1 5h14M1 8h14M1 11h14M5 5v10" stroke="#9cc4ea" strokeWidth="1.3" /></Svg>
        <Printer size={16} color={W} />
      </div>
      <Sep className="mx-[5px] h-4" />
      <Svg><path d="M7 1h8v14H7z" fill={W} /><path d="M6 3H1v10h5M3 8h6" stroke="#d43ad4" strokeWidth="1.6" /></Svg>
      <Sep className="mx-[5px] h-4" />
      <div className="flex gap-2">
        <GridBadge bg="#b5b8bd" cell="#8d9198" /><GridBadge bg="#b5b8bd" cell="#8d9198" />
      </div>
      <Sep className="mx-[5px] h-4" />
      <div className="flex gap-2">
        <GridBadge cell="#e02a10" /><GridBadge cell="#22b060" line="#b000b0" /><GridBadge cell="#3a7a00" line="#3a7a00" />
      </div>
      <Sep className="mx-[5px] h-4" />
      <Check label="Select in tree" />
      <Sep className="mr-1 ml-auto h-4" />
      <DockIcon />
      <Caret size={6} className="mx-2" />
    </div>
  );
}

function SideIcons() {
  return (
    <div className="flex w-[42px] shrink-0 flex-col items-center border-r border-white bg-[#2a313d] pl-1.5">
      <button aria-label="Settings" className="flex h-[46px] items-center"><Settings size={28} color="#c9cdd4" strokeWidth={1.3} /></button>
      <button aria-label="Arrays" className="flex h-[42px] items-center">
        <Svg w={28} box="0 0 28 28">
          <path d="M0 1h8v3H0zM10 1h8v3h-8zM20 1h8v3h-8zM0 7h8v3H0zM10 7h8v3h-8zM20 7h8v3h-8zM0 13h8v3H0zM10 13h8v3h-8zM20 13h8v3h-8zM0 19h8v3H0zM10 19h8v3h-8zM20 19h8v3h-8zM0 25h8v3H0zM10 25h8v3h-8zM20 25h8v3h-8z" stroke="#7ba7d6" />
        </Svg>
      </button>
      <button aria-label="Modules" className="flex h-[37px] items-center">
        <Svg w={28} h={26} box="0 0 28 26"><path d="M1 1h26v17H1z" fill="#2b9bf0" /><path d="M7 1v17M14 1v17M21 1v17M1 9h26M4 18v8M24 18v8" stroke="#a9d4f7" /></Svg>
      </button>
      <button aria-label="Electric" className="flex h-[39px] w-full items-center justify-center border-t border-l border-[#d5d8dd] bg-[#353d4a]"><TreeGlyph size={30} /></button>
      <button aria-label="Check" className="flex h-[42px] items-center"><Settings size={26} color="#e0ae45" strokeWidth={1.3} /></button>
      <button aria-label="Layers" className="flex h-[38px] items-center">
        <Svg w={26} h={24} box="0 0 26 24"><path d="M0 6h14M0 11h16" stroke="#e57a8a" strokeWidth="2" /><path d="M0 16h26" stroke="#5fc48c" strokeWidth="3" /><path d="M0 21h26" stroke="#4a86b8" strokeWidth="3" /><path d="M19 1l1 3 4-1-2 3 3 3-4 0-2 3-2-3-4 0 3-3-1-4 3 2z" fill="#f0b84a" /></Svg>
      </button>
      <button aria-label="Tools" className="flex h-[42px] w-full items-center justify-center border-b border-[#9aa1ad]">
        <Svg w={30} box="0 0 30 30">
          <path d="M6 6l18 18" stroke="#dfe2e6" strokeWidth="5" />
          <path d="M2 8a5 5 0 007-7M28 22a5 5 0 00-7 7" stroke="#dfe2e6" strokeWidth="4" />
          <path d="M19 12L5 28" stroke="#f0a04b" strokeWidth="4" />
          <path d="M15 4l6-3 8 8-3 3-4-3-3 3-3-3 2-3z" fill="#dfe2e6" />
        </Svg>
      </button>
    </div>
  );
}

function GroupHeader({ title }) {
  return (
    <button className="relative flex h-5 w-full items-center justify-center bg-[#252d38] pt-px pl-5 text-[#c0c4cc]">
      <Svg w={12} box="0 0 12 12" className="absolute left-1.5"><path d="M1 9l5-6 5 6" stroke={W} strokeWidth="2" /></Svg>
      {title}
    </button>
  );
}

function IconCell({ children, label, dim, wide }) {
  return (
    <button
      aria-label={label}
      className={clsx(
        'flex h-[19px] items-center justify-center border',
        wide ? 'w-[22px]' : 'w-[15px]',
        dim ? 'border-[#d9dbdf] bg-[#d0d3d9] text-[#8a8f98]' : 'border-[#9a9a9a] bg-[#e6e6e6] text-black',
      )}
    >
      {children}
    </button>
  );
}

function FieldForm() {
  const label = 'w-[130px] shrink-0 pl-[9px]';
  return (
    <div className="pr-0.5 text-[#e0e3e8]">
      <GroupHeader title="Common" />
      <div className="flex h-[151px] flex-col border border-black">
        <div className="flex items-center pt-1.5">
          <label htmlFor="hierarchy" className={label}>Hierarchy</label>
          <div className="mr-2 ml-[7px] flex h-6 flex-1 items-center border border-[#9aa1ad] bg-white pr-0.5 pl-1 text-[#333]">
            <Svg><path d="M0.5 0.5h15v15H0.5z" fill="#ffff00" stroke="#000" /><path d="M8 4v4M3 8h10M3 8v3M8 8v3M13 8v3M2 11h3v3H2zM7 11h3v3H7zM11 11h3v3h-3z" stroke="#4a7a00" /><path d="M6 2h4v3H6z" fill="#5a7ad0" /></Svg>
            <select id="hierarchy" className="min-w-0 flex-1 appearance-none bg-transparent pl-1 outline-none"><option>ZWR</option></select>
            <IconCell label="Go to" wide>
              <Svg><circle cx="8" cy="8" r="7" fill="#eaf7ea" stroke="#2e9a3c" /><path d="M3 8h8M8 4l4 4-4 4" stroke="#18862a" strokeWidth="2" /></Svg>
            </IconCell>
            <IconCell label="Open hierarchy list"><Caret size={6} /></IconCell>
          </div>
        </div>
        <div className="flex items-center pt-1.5">
          <label htmlFor="device" className={label}>String Device</label>
          <div className="mr-2 ml-[7px] flex h-6 flex-1 items-center border border-[#9aa1ad] bg-white pr-0.5 pl-1 text-[#333]">
            <Svg><path d="M8 1l7 3v8l-7 4-7-4V4z" fill="#c98a3c" stroke="#7a4a14" /><path d="M1 4l7 4 7-4M8 8v8" stroke="#7a4a14" /></Svg>
            <select id="device" className="min-w-0 flex-1 appearance-none bg-transparent pl-1 outline-none"><option>DC-CMB-U10-16</option></select>
            <IconCell label="Refresh device" dim wide><RefreshCw size={14} /></IconCell>
            <IconCell label="Remove device" wide><Svg><path d="M3 2l10 12M13 2L3 14" stroke="#e02a18" strokeWidth="3.5" /></Svg></IconCell>
            <IconCell label="Open device list"><Caret size={6} /></IconCell>
          </div>
        </div>
        <div className="mt-[11px] flex h-[18px] items-center">
          <span className={label}>Placement direction</span>
          <div className="mr-2.5 ml-1.5 flex flex-1 justify-between">
            <button aria-label="From top left"><Svg w={14}><path d="M3 14V4h11M0 10l3 5 3-5M10 1l5 3-5 3" stroke="#6fb8f0" strokeWidth="2" /></Svg></button>
            <button aria-label="From top right"><Svg w={14}><path d="M13 14V4H2M10 11l3 4 3-4M5 1L1 4l4 3" stroke="#767e8a" strokeWidth="2" /></Svg></button>
            <button aria-label="From bottom left"><Svg w={14}><path d="M3 2v10h11M0 6l3-5 3 5M10 9l5 3-5 3" stroke="#767e8a" strokeWidth="2" /></Svg></button>
            <button aria-label="From bottom right"><Svg w={14}><path d="M13 2v10H2M10 6l3-5 3 5M5 9l-4 3 4 3" stroke="#767e8a" strokeWidth="2" /></Svg></button>
          </div>
        </div>
        <div className="mt-2.5 flex h-[18px] items-center">
          <span className={label}>Target device</span>
          <Check label="Always at trench" checked className="ml-[7px] w-[329px]" />
          <Check label="Fit best array" />
        </div>
        <div className="mt-3 flex h-5 items-center">
          <span className={label}>Row Trench from</span>
          <input type="checkbox" aria-label="Row trench from" className="ml-[7px] h-3 w-3 appearance-none border border-[#f2f3f5] bg-[#c3c8d0]" />
          <div className="ml-2.5 flex h-5 w-[113px] items-center border border-[#9aa1ad] bg-[#f3f4f6]">
            <input aria-label="Trench distance" disabled defaultValue="0.80" className="min-w-0 flex-1 pr-0.5 text-right text-[#9a9fa8]" />
            <span className="flex h-4 w-3.5 flex-col items-center justify-between bg-[#d9dbdf] text-[#8a8f98]"><Caret size={6} className="rotate-180" /><Caret size={6} /></span>
          </div>
          <span className="ml-1 text-[#8a919c]">m</span>
        </div>
      </div>

      <GroupHeader title="String connection" />
      <div className="flex h-[151px] flex-col border border-black">
        <div className="mt-2 flex h-[18px] items-center">
          <span className={label}>Y-Connectors</span>
          <Check label="None" checked className="ml-[7px] w-[176px]" />
          <Check label="At String" className="w-[153px]" />
          <Check label="At Device" />
        </div>
        <div className="mt-2.5 flex items-center">
          <label htmlFor="yout" className={label}>Y-Out Cable</label>
          <div className="mr-2 ml-[7px] flex h-6 flex-1 items-center border border-[#9aa1ad] bg-[#f0f0f0] pr-0.5">
            <input id="yout" disabled className="min-w-0 flex-1 px-1" />
            <IconCell label="Refresh cable" dim wide><RefreshCw size={13} /></IconCell>
            <IconCell label="Browse cable" dim wide>
              <Svg><circle cx="3" cy="10" r="1.5" fill="currentColor" /><circle cx="8" cy="10" r="1.5" fill="currentColor" /><circle cx="13" cy="10" r="1.5" fill="currentColor" /></Svg>
            </IconCell>
            <IconCell label="Clear cable" dim wide><Svg w={13}><path d="M3 2l10 12M13 2L3 14" stroke="#7d828b" strokeWidth="4" /></Svg></IconCell>
            <IconCell label="Open cable list" dim><Caret size={6} /></IconCell>
          </div>
        </div>
        <Check label="Every module row connects to a different MPPT or target device" className="mt-1.5 ml-[137px] h-[18px]" />
        <Check label="Lowest module row connects to a different MPPT or target device" className="mt-3.5 ml-[137px] h-[18px]" />
      </div>
    </div>
  );
}

const DEFS = [
  { array: 'YL 2x22 Marc ohne Überstand', def: 'S2 - 2x22 Linear' },
  { array: 'YL 2x11 Marc ohne Überstand', def: 'S1 - YL 2x11 U-String' },
];

function StringDefs() {
  return (
    <div className="flex min-h-0 flex-1 pt-2 pr-1.5 pb-3">
      <span className="w-36 shrink-0 pt-1 pl-2.5 text-[#e0e3e8]">String Def.</span>
      <div className="flex-1 border border-[#8a8a8a] bg-white text-[#222]">
        <table className="h-full w-full table-fixed border-collapse text-[11px] [font-family:'Liberation_Sans',Arial,sans-serif]">
          <colgroup>
            <col className="w-[199px]" />
            <col className="w-[256px]" />
            <col />
          </colgroup>
          <thead>
            <tr className="h-4 border-b border-[#b0b0b0] bg-[#f0f0f0] text-left leading-4 [&>th]:border-r [&>th]:border-[#aaa] [&>th]:p-0 [&>th]:font-normal [&>th:last-child]:border-r-0">
              <th className="pl-1!">Array</th>
              <th className="pl-1.5!">String-Definition</th>
              <th />
            </tr>
          </thead>
          <tbody className="[&>tr>td]:border-r [&>tr>td]:border-[#8a8a8a] [&>tr>td]:p-0 [&>tr>td:last-child]:border-r-0">
            <tr className="h-1"><td /><td /><td /></tr>
            {DEFS.map(d => (
              <tr key={d.array} className="h-[23px] whitespace-nowrap">
                <td className="overflow-hidden">
                  <div className="flex items-center gap-1 pl-6">
                    <Svg><path d="M0.5 0.5h15v15H0.5z" fill="#7a7af0" stroke="#000" /><path d="M5.500 0v16M10.500 0v16M0 8h16" stroke="#000" /></Svg>
                    {d.array}
                  </div>
                </td>
                <td>
                  <div className="mr-1 ml-1 flex h-5 items-center border border-[#8a8a8a] bg-white">
                    <span className="ml-0.5 flex"><StringIcon /></span>
                    <select aria-label={d.array} className="min-w-0 flex-1 appearance-none bg-transparent pl-1 outline-none"><option>{d.def}</option></select>
                    <IconCell label="Edit definition" wide><Svg><path d="M2 2h8v12H2z" fill="#fff" stroke="#999" /><path d="M7 14l6-12" stroke="#e08a2a" strokeWidth="2" /></Svg></IconCell>
                    <IconCell label="New definition" wide><Svg><path d="M3 1h6l4 4v10H3z" fill="#fff" stroke="#aaa" /></Svg></IconCell>
                    <IconCell label="Open definitions"><Caret size={6} /></IconCell>
                  </div>
                </td>
                <td />
              </tr>
            ))}
            <tr><td /><td /><td /></tr>
          </tbody>
        </table>
      </div>
    </div>
  );
}

function HeliosPalette() {
  const tabs = ['Placement', 'Insert', 'Electric', 'Output', 'Analysis', 'Others'];
  return (
    <aside className="mr-1 ml-[3px] flex w-[666px] shrink-0 flex-col bg-[#3b4453]">
      <h2 className="flex h-[23px] shrink-0 items-center gap-1.5 border-b border-[#3b4453] bg-[#2e3440] pl-1.5 text-[#d8dbe0]">
        <Svg w={3} h={10} box="0 0 3 10"><path d="M1.5 0v10" stroke="#8a919c" strokeWidth="2" strokeDasharray="1 1" /></Svg>
        HELIOS3D
      </h2>
      <div className="flex h-[27px] shrink-0 items-center gap-[9px] bg-[#2e3440] pt-px pl-5">
        <Sep className="mx-px h-4 bg-[#d5d8dd]" />
        <button aria-label="Hide all"><EyeOff size={16} color="#c3c8d0" /></button>
        <button aria-label="Hide selected"><EyeOff size={16} color="#f0cf7a" /></button>
        <button aria-label="Regenerate"><RefreshCw size={16} color={Y} /></button>
        <button aria-label="Sync"><RefreshCw size={16} color="#6f9fe8" /></button>
        <Svg w={8} className="ml-3"><path d="M1 3h14M3 8h10l-5 5z" stroke={W} strokeWidth="1.5" /></Svg>
      </div>
      <nav className="flex h-[22px] shrink-0 items-center gap-px bg-[#252d38] text-[#9fa5af]">
        {tabs.map(t => (
          <button key={t} className={clsx('h-full px-3', t === 'Electric' && 'rounded-t-sm bg-[#3b4453] text-white')}>{t}</button>
        ))}
        <button aria-label="Help" className="ml-1.5 flex items-center gap-2.5 text-[16px] font-bold text-[#d5d8dd]">?<Caret size={6} /></button>
      </nav>
      <HeliosRibbon />
      <div className="flex min-h-0 flex-1">
        <div className="flex shrink-0 bg-[#222933]"><SideIcons /></div>
        <div className="flex min-w-0 flex-1 flex-col">
          <TreeToolbar />
          <ObjectTree />
          <div className="flex h-[7px] shrink-0 items-center justify-center bg-[#c9ccd1]">
            <Svg w={34} h={3} box="0 0 34 3"><path d="M0 1.5h34" stroke="#222" strokeWidth="3" strokeDasharray="2 2" /></Svg>
          </div>
          <div className="flex h-[25px] shrink-0 items-center bg-[#252d38] text-[#aab0ba]">
            <button className="flex h-full items-center gap-0.5 rounded-t bg-[#3b4453] pr-1.5 pl-2.5 font-bold text-white"><ZoneIcon kind="autoGreen" />Field</button>
            <button className="flex h-full items-center gap-0.5 bg-[#2b323e] pr-2 pl-1.5"><ZoneIcon kind="trench" /><span className="text-black">/</span><GridBadge cell="#3a7a00" />Cable Trenches &amp; Dev. Areas</button>
            <button className="flex h-full items-center gap-1 bg-[#2b323e] pr-2.5 pl-2">
              <Svg w={14}><path d="M2 15V7" stroke="#2f9df0" strokeWidth="3" /><path d="M6 15V1" stroke="#3fc04a" strokeWidth="3" /><path d="M10 15V5" stroke="#e02a10" strokeWidth="3" /><path d="M14 15V9" stroke="#e02a10" strokeWidth="3" /></Svg>
              Statistik
            </button>
          </div>
          <div className="flex h-[26px] shrink-0 items-center bg-[#444e5e] pr-1 pl-1">
            <div className="flex gap-2.5"><TreeGlyph badge="star" /><TreeGlyph badge="x" /></div>
            <Sep className="mx-[5px] h-4" />
            <div className="flex gap-2.5"><WireIcon /><WireIcon badge /></div>
            <Sep className="mx-[5px] h-4" />
            <GridBadge bg="#c3c6cb" cell="#9a9ea6" />
            <Sep className="mr-1 ml-auto h-4" />
            <DockIcon />
          </div>
          <FieldForm />
          <StringDefs />
        </div>
      </div>
    </aside>
  );
}

/* ---------- model space ---------- */

function DoubleLine({ x1, y1, x2, y2, gap = 3 }) {
  const horizontal = y1 === y2;
  const dx = horizontal ? 0 : gap / 2;
  const dy = horizontal ? gap / 2 : 0;
  return (
    <>
      <line x1={x1} y1={y1} x2={x2} y2={y2} stroke="#3d3a6e" strokeWidth={gap} />
      <line x1={x1 - dx} y1={y1 - dy} x2={x2 - dx} y2={y2 - dy} stroke="#8f8cc6" strokeWidth="1.5" />
      <line x1={x1 + dx} y1={y1 + dy} x2={x2 + dx} y2={y2 + dy} stroke="#8f8cc6" strokeWidth="1.5" />
    </>
  );
}

function Inverter({ x, y }) {
  return (
    <g transform={`translate(${x} ${y})`}>
      <rect width="104" height="104" fill="#ffff00" />
      <path d="M0 104L104 0M13 22h42M13 34h42M50 78a10.5 10.5 0 0121 0a10.5 10.5 0 0021 0" stroke="#7a7a1e" strokeWidth="1.2" fill="none" />
    </g>
  );
}

function Grip({ x, y }) {
  return (
    <g>
      <rect x={x} y={y} width="10" height="17" fill="none" stroke="#fff" strokeWidth="1.5" />
      <rect x={x + 4} y={y + 8} width="1" height="1" fill="#fff" />
    </g>
  );
}

function CadText({ x, y, size, children }) {
  return (
    <text x={x} y={y} fontSize={size} fill="#dfe2e5" fontWeight="200" className="[font-family:'DejaVu_Sans','DejaVu_Sans_Light',sans-serif]">
      {children}
    </text>
  );
}

function Drawing() {
  return (
    <svg viewBox="674 186 1857 1059" preserveAspectRatio="xMinYMin slice" className="block h-full w-full" role="img" aria-label="Model space">
      {/* module tables */}
      <path d="M2017 186H2531V363H2023z" fill="#262a2e" />
      <path d="M2057 742H2531V1065H2066z" fill="#262a2e" />
      <path d="M674 1088H1553V1245H674z" fill="#262a2e" />

      <DoubleLine x1={2018} y1={203} x2={2531} y2={203} gap={4} />
      <DoubleLine x1={2120} y1={186} x2={2124} y2={363} />
      <DoubleLine x1={2223} y1={186} x2={2228} y2={363} />
      <DoubleLine x1={2327} y1={186} x2={2331} y2={363} />
      <DoubleLine x1={2430} y1={186} x2={2435} y2={363} />
      <path d="M2018 186L2023 363" stroke="#8f8cc6" strokeWidth="2" />
      <path d="M2028 186V358" stroke="#c3c6c9" strokeWidth="1" />
      <path d="M2023 358H2531" stroke="#b5bdb5" strokeWidth="2" />
      <path d="M2023 362.5H2531" stroke="#a3a0d0" strokeWidth="3" />

      <path d="M2057 741.5H2531" stroke="#fff" strokeWidth="1.5" />
      <path d="M2057 745.5H2531" stroke="#a3a0c8" strokeWidth="3" />
      <DoubleLine x1={2061} y1={905} x2={2531} y2={905} gap={4} />
      <DoubleLine x1={2159} y1={745} x2={2168} y2={1063} />
      <DoubleLine x1={2262} y1={745} x2={2272} y2={1063} />
      <DoubleLine x1={2366} y1={745} x2={2375} y2={1063} />
      <DoubleLine x1={2470} y1={745} x2={2478} y2={1063} />
      <path d="M2057 742L2066 1064" stroke="#8f8cc6" strokeWidth="2" />
      <path d="M2072 745V1060" stroke="#a8abb0" strokeWidth="1.5" />
      <path d="M2066 1059.5H2531" stroke="#eef0e6" strokeWidth="1.5" />
      <path d="M2066 1063.5H2531" stroke="#9a97cc" strokeWidth="3" />

      <path d="M674 1088.5H1535V1092H1553" stroke="#fff" strokeWidth="1.5" fill="none" />
      <path d="M674 1092.5H1535" stroke="#a09dcc" strokeWidth="3" />
      <DoubleLine x1={708} y1={1093} x2={713} y2={1245} />
      <DoubleLine x1={811} y1={1093} x2={817} y2={1245} />
      <DoubleLine x1={914} y1={1093} x2={920} y2={1245} />
      <DoubleLine x1={1018} y1={1093} x2={1024} y2={1245} />
      <DoubleLine x1={1121} y1={1093} x2={1127} y2={1245} />
      <DoubleLine x1={1224} y1={1093} x2={1225} y2={1105} />
      <DoubleLine x1={1328} y1={1093} x2={1329} y2={1105} />
      <DoubleLine x1={1431} y1={1093} x2={1432} y2={1105} />
      <DoubleLine x1={1227} y1={1168} x2={1230} y2={1245} />
      <DoubleLine x1={1331} y1={1168} x2={1334} y2={1245} />
      <DoubleLine x1={1434} y1={1168} x2={1437} y2={1245} />
      <path d="M1534 1089L1540 1245" stroke="#a9a9c4" strokeWidth="2.5" />
      <path d="M1553 1092V1245" stroke="#d0d2d4" strokeWidth="1" />

      {/* parcel boundaries */}
      <path d="M1499 186L1564 1245M2011 186L2076 1245" stroke="#ffbf00" strokeWidth="5.5" />

      {/* station */}
      <rect x="1043" y="552" width="440" height="290" fill="none" stroke="#cfd3d8" strokeWidth="1.5" />
      <Inverter x={1053} y={534} />
      <Inverter x={1053} y={739} />
      <Inverter x={1165} y={739} />
      <Inverter x={1278} y={739} />
      <g transform="translate(1390 739)" stroke="#6f6f2a" strokeWidth="1.5">
        <rect x="1" y="1" width="102" height="102" fill="#ffff00" />
        <g fill="none">
          <circle cx="52" cy="36" r="26" />
          <circle cx="52" cy="67" r="26" />
          <path d="M52 0v10M52 93v10" />
        </g>
      </g>

      <CadText x={1047} y={525} size={50}>1.4</CadText>
      <CadText x={1047} y={730} size={50}>1.1</CadText>
      <CadText x={1160} y={730} size={50}>1.2</CadText>
      <CadText x={1273} y={730} size={50}>1.3</CadText>
      <CadText x={1391} y={730} size={50}>T1</CadText>
      <CadText x={1375} y={971} size={50}>1.3.15</CadText>
      <CadText x={1154} y={1163} size={73}>3.15.S28</CadText>
      <CadText x={2045} y={726} size={66}>1</CadText>
      <CadText x={2087} y={709} size={69}>(−4.53°</CadText>
      <CadText x={2412} y={709} size={69}>W)</CadText>

      {/* cable trenches */}
      <g stroke="#d414d4" strokeWidth="1.5" fill="none">
        <path d="M674 697H941M1586 697H2531" />
        <path d="M1586 608.5H1822L1788 186" />
        <path d="M1344 905L1378 931M1434 975L1440 980M1484 1014L1546 1062L1561 1245" />
      </g>
      <path d="M940 645L1044 697L940 749zM1482 557L1586 608L1482 660zM1586 645V749L1482 697zM1264 843L1376 864L1313 946z" fill="#ff00ff" />

      <g transform="translate(1379 980)">
        <rect width="104" height="104" fill="#ffff00" />
        <path d="M0 52h52M94 11H52v82h42M52 38h42M52 66h42" stroke="#7a7a1e" strokeWidth="1.5" fill="none" />
      </g>

      <Grip x={2137} y={856} />
      <Grip x={926} y={1203} />
      <Grip x={1453} y={1203} />

      {/* UCS icon and crosshair */}
      <g stroke="#fff" fill="none">
        <path d="M699.5 1169V1219.5H750M695.5 1214.5h9v10h-9z" />
        <path d="M682.5 935V996M682.5 1003V1064M686 999.5H747M674 999.5H679M679.5 996.5h6v7h-6z" />
      </g>
      <CadText x={701} y={1165} size={19}>Y</CadText>
      <CadText x={754} y={1218} size={19}>X</CadText>
      <g stroke="#fff" fill="none">
        <path d="M679 209h5v5h-5zM687 209h4v5h-4zM679 218h4v5h-4z" />
        <path d="M686 217l5 6M691 217l-5 6" />
      </g>
    </svg>
  );
}

function ViewCube() {
  return (
    <div className="absolute top-[42px] right-[17px] flex w-[134px] flex-col items-center">
      <svg viewBox="0 0 134 128" className="w-full" role="img" aria-label="View cube">
        <circle cx="67" cy="64" r="56" fill="none" stroke="#8d9196" strokeOpacity="0.45" strokeWidth="9" />
        <rect x="41" y="38" width="52" height="52" fill="#b9bcbc" fillOpacity="0.93" />
        <g textAnchor="middle" fontWeight="700" className="[font-family:'Liberation_Sans',Arial,sans-serif]">
          <text x="67" y="68" fontSize="11" fill="#4d5156">TOP</text>
          <g fontSize="20" fill="#b5b8bb">
            <text x="67" y="16">N</text>
            <text x="67" y="127">S</text>
            <text x="10" y="71">W</text>
            <text x="124" y="71">E</text>
          </g>
        </g>
      </svg>
      <button className="mt-[23px] flex h-[18px] w-12 items-center justify-center gap-1 rounded border border-[#b5b6c4] bg-[#90919f] text-[10px] text-[#d9dae2]">
        WCS
        <Svg w={8} box="0 0 8 8"><path d="M1 2h6L4 6z" stroke="#d9dae2" /></Svg>
      </button>
    </div>
  );
}

function NavBar() {
  return (
    <div className="absolute top-[236px] right-1 flex h-[212px] w-8 flex-col items-center rounded bg-[#5e6266] py-1 text-[#44484d]">
      <button aria-label="Steering wheel" className="mt-3"><Svg w={24} box="0 0 24 24"><path d="M7 2h15v15l-5 5H7l-5-5V7z" stroke="currentColor" /><circle cx="12" cy="12" r="5.5" stroke="currentColor" /></Svg></button>
      <Caret size={5} className="my-1.5" />
      <button aria-label="Pan"><Hand size={24} strokeWidth={1.3} /></button>
      <button aria-label="Zoom" className="mt-1"><Svg w={24} box="0 0 24 24"><path d="M1 1l14 14M15 1L1 15M1 5V1h4M11 1h4v4M1 11v4h4" stroke="currentColor" /><circle cx="16" cy="14" r="5" stroke="currentColor" /><path d="M19 18l4 5" stroke="currentColor" strokeWidth="2" /></Svg></button>
      <Caret size={5} className="my-1.5" />
      <button aria-label="Orbit"><Orbit size={24} strokeWidth={1.3} /></button>
      <Caret size={5} className="my-1" />
      <button aria-label="Show motion"><Svg w={24} box="0 0 24 24"><path d="M1 1h6v6H1zM9 1h6v6H9zM17 1h6v6h-6zM1 10h16v13H1zM7 13v6l5-3z" stroke="currentColor" /></Svg></button>
    </div>
  );
}

const LOG = [
  'Function: <ObjectModified>b__231_1 executing...',
  'Command:',
  'completed!',
  'Command:',
  'Command: Specify opposite corner or [Fence/WPolygon/CPolygon]:',
];

function CommandWindow() {
  return (
    <div className="flex h-[104px] shrink-0 text-[12px] [font-family:'Liberation_Mono',monospace]">
      <div className="flex w-[25px] flex-col items-center gap-2.5 bg-[#2b323e] pt-1.5 text-[#d8dbe0]">
        <Svg w={18} h={6} box="0 0 18 6"><path d="M0 1h18M0 3h18M0 5h18" stroke="currentColor" strokeDasharray="2 1" /></Svg>
        <button aria-label="Close command line"><Svg w={9}><path d="M1 1l14 14M15 1L1 15" stroke="currentColor" strokeWidth="3" /></Svg></button>
        <button aria-label="Customize"><Wrench size={15} fill="currentColor" /></button>
      </div>
      <div className="flex min-w-0 flex-1 flex-col">
        <div className="flex flex-1 flex-col justify-end bg-[#c8c8c8] pb-px pl-0.5 leading-[15px] text-[#1c1c1c]">
          {LOG.map((l, i) => <p key={i}>{l}</p>)}
        </div>
        <div className="flex h-[21px] items-center gap-1 border-t-2 border-[#222933] bg-white pl-1 text-[#555]">
          <Svg><path d="M1 2h14v12H1z" stroke="#444" strokeWidth="1.5" /><path d="M1 3h14" stroke="#444" strokeWidth="2" /><path d="M3 6l3 2-3 2M7 11h4" stroke="#444" /></Svg>
          <Caret />
          <input aria-label="Command line" placeholder="Type a command" className="flex-1 italic outline-none placeholder:text-[#777]" />
        </div>
      </div>
    </div>
  );
}

function Canvas() {
  return (
    <main className="flex min-w-0 flex-1 flex-col">
      <div className="relative min-h-0 flex-1 bg-[#212830]">
        <Drawing />
        <div className="absolute top-1.5 left-1 flex text-[#e8eaee]"><button>[−]</button><button>[Top]</button><button>[2D Wireframe]</button></div>
        <div className="absolute top-2.5 right-3 flex items-center gap-2 text-white">
          <button aria-label="Minimize view"><Svg w={11}><path d="M0 11h16" stroke="#fff" strokeWidth="4" /></Svg></button>
          <button aria-label="Restore view"><Svg w={11}><path d="M2 5h10v10H2zM5 4V1h10v10h-3" stroke="#fff" strokeWidth="2" /></Svg></button>
          <button aria-label="Close view"><Svg w={11}><path d="M2 1l12 14M14 1L2 15" stroke="#fff" strokeWidth="3" /></Svg></button>
        </div>
        <ViewCube />
        <NavBar />
      </div>
      <div className="h-[5px] shrink-0 bg-[#434850]" />
      <CommandWindow />
    </main>
  );
}

function RightDock() {
  const cell = 'flex h-[23px] w-[22px] items-center justify-center bg-[#3b4453]';
  return (
    <div className="flex w-7 shrink-0 flex-col items-center gap-[5px] pt-[5px]">
      <button aria-label="Toolspace" className={cell}><Svg><path d="M1 1h3v14H1zM6.5 1h3v14h-3zM12 1h3v14h-3z" stroke={W} /></Svg></button>
      <button aria-label="Layers" className={cell}><Svg><path d="M5 0h9L9 5H0zM0 7h8v2H0zM0 11h6v2H0z" fill={W} /><path d="M8 6h7v9H8z" fill={W} stroke="#3b4453" /><path d="M10 8h4v2h-4z" fill="#3b8ad0" /></Svg></button>
      <button aria-label="Properties" className={cell}><Svg><path d="M2 0h12v16H2z" fill={W} /><path d="M4 2h8v5H4z" fill="#6fb8f0" /><path d="M4 10h8M4 13h8M9 9v2M6 12v2" stroke="#333" /></Svg></button>
      <button aria-label="Clipboard" className={cell}><Svg><path d="M0 3h16v13H0z" fill={W} /><path d="M5 1h6v4H5z" fill={W} stroke="#3b4453" /></Svg></button>
    </div>
  );
}

/* ---------- status bar ---------- */

const STATUS_PATHS = {
  axis: 'M3 1v13h12M1 3l2-2 2 2M13 12l2 2-2 2',
  axis2: 'M3 1v13h12M3 14L13 3M9 3h4v4',
  grid: 'M4 0v16M8 0v16M12 0v16M0 4h16M0 8h16M0 12h16',
  snap: 'M1 2h2M7 2h2M13 2h2M1 8h2M7 8h2M13 8h2M1 14h2M7 14h2M13 14h2',
  infer: 'M8 1h6v6H8zM1 9h6v6H1zM7 9h2',
  dyn: 'M4 1v7M0 5h8M7 10h8v4H7z',
  ortho: 'M3 0v14h13M3 10h4v4',
  polar: 'M7 3a6 6 0 106 6M7 9l7-8M7 9h9',
  iso: 'M2 0l12 16M2 14l5-5M8 2v12',
  track: 'M14 2L2 14h13',
  osnap: 'M4 4h10v11H4zM1 1h4v4H1z',
  lines: 'M1 2h14M1 6h10M1 10h14M1 14h8',
  trans: 'M1 1h14v14H1zM4 4h2v2H4zM10 4h2v2h-2zM7 7h2v2H7zM4 10h2v2H4zM10 10h2v2h-2z',
  cube: 'M1 5l4-4h10v10l-4 4H1zM1 5h10v10M11 5l4-4',
  ucs: 'M3 1v10h12M3 4l7 7M1 3l2-2 2 2M13 9l2 2-2 2M9 15h5',
  filter: 'M2 3h10l2 3v9H4l-2-3zM2 3l2 3h10M8 6v9',
  gizmo: 'M8 1l6 4v6l-6 4-6-4V5zM8 8v7M8 8l6-3M8 8L2 5M5 3v8h6',
  fig: 'M8 1L4 14l4-3 4 3z',
  ruler: 'M4 0h5v16H4zM9 2h3M9 6h3M9 10h3M9 14h3',
  list: 'M2 0h12v16H2zM5 4h2M9 4h3M5 8h2M9 8h3M5 12h2M9 12h3',
  lockui: 'M1 2h13v6M1 2v11h7M10 10h5v5h-5zM11 10V8h3v2',
  iso2: 'M1 1h6v6H1zM10 6h5v5h-5zM4 13l3-3 3 5H3z',
  perf: 'M8 1a7 7 0 100 14A7 7 0 008 1zM8 9l4-5',
  surf: 'M8 2l7 4-7 4-7-4zM1 9l7 4 7-4M1 12l7 4 7-4',
  target: 'M1 4V1h3M12 1h3v3M15 12v3h-3M4 15H1v-3M5 11l2-6 4-1v4l-4 4z',
  tag: 'M9 1l6 1v5l-7 8-6-6zM7 9l3-3',
  full: 'M1 1h14v14H1zM9 4h3v3M12 4L9 7M7 12H4V9M4 12l3-3',
};

function StatusCaret() {
  return <span className="flex h-[23px] w-[15px] shrink-0 items-center justify-center bg-[#3b4453]"><Caret /></span>;
}

function StatusIcon({ name, on, color = W, caret }) {
  return (
    <>
      <button aria-label={name} className={clsx('flex h-[23px] w-6 shrink-0 items-center justify-center', on ? 'bg-[#5a8fcb]' : 'bg-[#3b4453]')}>
        <Svg w={15}>
          <path d={STATUS_PATHS[name]} stroke={color} fill={name === 'fig' ? color : 'none'} strokeWidth={name === 'lines' ? 2.5 : 1.4} />
        </Svg>
      </button>
      {caret && <StatusCaret />}
    </>
  );
}

function StatusBar() {
  const block = 'flex h-[23px] items-center gap-1 bg-[#3b4453] px-1';
  return (
    <footer className="mb-1 flex h-[28px] shrink-0 items-center pr-0.5 pl-5 text-[12px] text-[#e8eaee]">
      <button aria-label="Layouts"><MenuLines /></button>
      <div className="relative ml-2 flex h-6 items-center px-4">
        <Svg w="100%" h="100%" box="0 0 69 24" className="absolute inset-0"><path d="M8 0h61l-8 24H0z" fill="#3b4453" /></Svg>
        <button className="relative text-[12px] font-bold text-white">Model</button>
      </div>
      <button className="ml-2 text-[11px]">Layout1</button>
      <span className="mx-2 flex"><Slash /></span>
      <button className="ml-px text-[11px]">Layout2</button>
      <span className="mx-2 flex"><Slash /></span>
      <button aria-label="New layout"><PlusGlyph /></button>
      <span className="ml-2.5 flex"><Slash /></span>

      <div className="ml-auto flex items-center gap-0.5 whitespace-nowrap">
        <StatusIcon name="axis" on />
        <StatusIcon name="axis2" />
        <button className={block}><Svg><path d="M8 1l7 14H1zM8 4v10M6 9h4" stroke={W} /></Svg>1x<Caret /></button>
        <button className={block}><Globe size={16} />ETRS89.UTM-32N<Caret /></button>
        <button className={block}><Svg w={15}><path d={STATUS_PATHS.list} stroke={W} strokeWidth="1.4" /></Svg>1 : 36.893<Caret /></button>
        <button aria-label="Lock scale" className="flex h-[23px] w-[22px] items-center justify-center bg-[#5a8fcb]"><Lock size={14} fill="#fff" color="#fff" /></button>
        <span className={clsx(block, 'pl-[22px]!')}>4514508.918, 5390910.928, 0.000</span>
        <button className={block}>MODEL</button>
        <StatusIcon name="grid" />
        <StatusIcon name="snap" caret />
        <StatusIcon name="infer" />
        <StatusIcon name="dyn" />
        <StatusIcon name="ortho" on />
        <StatusIcon name="polar" caret />
        <StatusIcon name="iso" color="#e58a8a" caret />
        <StatusIcon name="track" />
        <StatusIcon name="osnap" caret />
        <StatusIcon name="lines" on />
        <StatusIcon name="trans" />
        <button aria-label="Selection cycling" className="flex h-[23px] w-6 items-center justify-center bg-[#3b4453]"><Svg><path d="M5 5h10v10H5z" fill={G} /><path d="M4 0v8M0 4h12" stroke={W} strokeWidth="1.4" /></Svg></button>
        <StatusIcon name="cube" caret />
        <StatusIcon name="ucs" />
        <StatusIcon name="filter" color={B} caret />
        <StatusIcon name="gizmo" on caret />
        <StatusIcon name="fig" on />
        <StatusIcon name="fig" />
        <StatusIcon name="fig" />
        <button className={block}>1:1000<Caret /></button>
        <button aria-label="Workspace switching" className={block}><Settings size={15} strokeWidth={3} /></button>
        <StatusCaret />
        <button aria-label="Annotation monitor" className={block}><PlusGlyph /></button>
        <button className={block}><Svg w={15}><path d={STATUS_PATHS.ruler} stroke={W} strokeWidth="1.4" /></Svg>Decimal<Caret className="ml-1.5" /></button>
        <StatusIcon name="list" />
        <StatusIcon name="lockui" caret />
        <StatusIcon name="iso2" />
        <StatusIcon name="perf" on />
        <button className={block}><Svg w={15}><path d={STATUS_PATHS.surf} fill={B} stroke={W} /></Svg>3.500</button>
        <StatusIcon name="target" caret />
        <StatusIcon name="tag" on color="#fff" />
        <button aria-label="Warnings" className={block}><TriangleAlert size={15} /></button>
        <button aria-label="Geo data" className="flex h-[23px] w-6 items-center justify-center bg-[#3b4453]"><Svg><circle cx="7" cy="7" r="7" fill="#3b8ad0" /><path d="M1 5h5v6H3z" fill="#f0c22b" /><path d="M5 10l4 4 6-8" stroke="#3fc04a" strokeWidth="2.5" /></Svg></button>
        <StatusIcon name="full" />
        <button aria-label="Customization" className={block}><MenuLines /></button>
      </div>
    </footer>
  );
}

export default function App() {
  return (
    <div className="flex h-screen flex-col overflow-hidden rounded-t-lg border-x border-b border-[#2389ab] bg-[#222933] pt-px text-[11px] [font-family:'Open_Sans','Noto_Sans',sans-serif]">
      <TitleBar />
      <MenuTabs />
      <Ribbon />
      <FileTabs />
      <div className="h-1 shrink-0 bg-[#3b4453]" />
      <div className="flex min-h-0 flex-1">
        <HeliosPalette />
        <Canvas />
        <RightDock />
      </div>
      <div className="h-[5px] shrink-0 bg-[#3b4453]" />
      <StatusBar />
    </div>
  );
}
